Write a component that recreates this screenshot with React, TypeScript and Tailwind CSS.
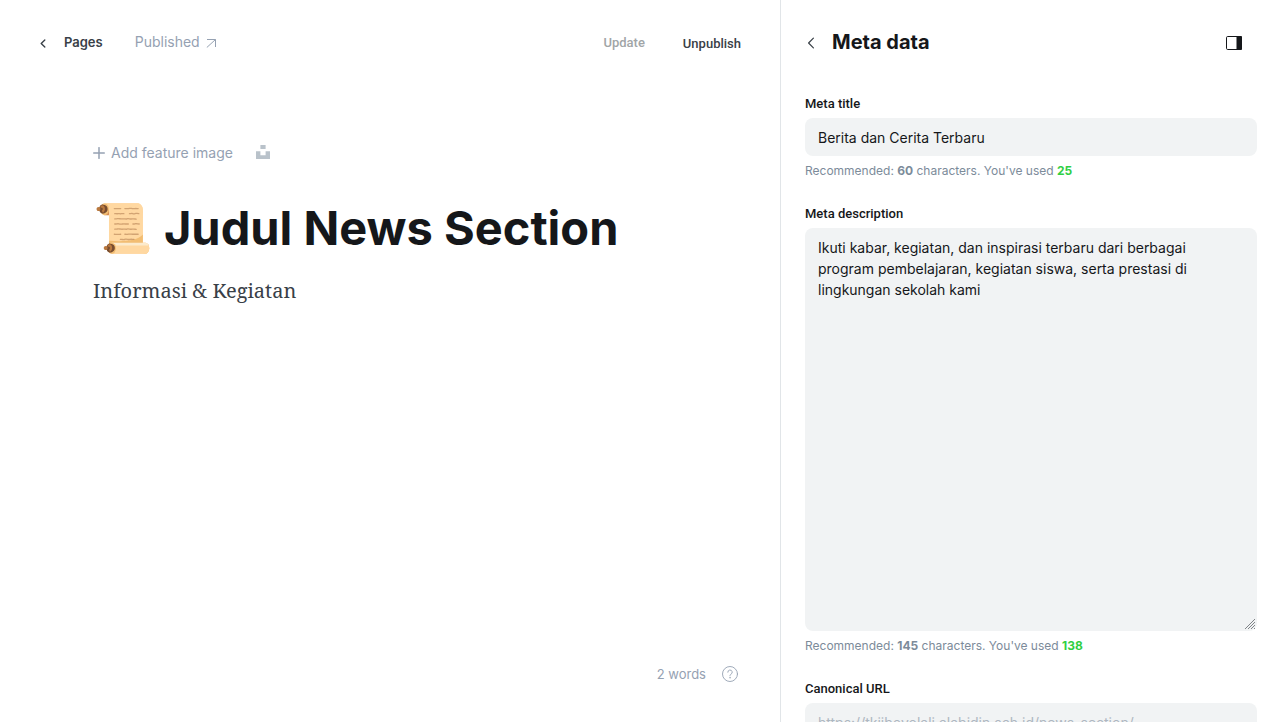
import { useState, type ReactNode } from "react";

function Chevron({ className }: { className: string }) {
  return (
    <svg viewBox="0 0 6 10" className={className} fill="none" stroke="currentColor" strokeLinecap="round" strokeLinejoin="round" aria-hidden="true">
      <path d="M5 1 1 5l4 4" />
    </svg>
  );
}

function ScrollEmoji() {
  return (
    <span role="img" aria-label="scroll" className="font-['Noto_Color_Emoji'] text-5xl leading-[60px]">
      📜
    </span>
  );
}

function Hint({ limit, used }: { limit: number; used: number }) {
  return (
    <p className="mt-1.5 text-xs leading-[18px] text-[#7c8b9a]">
      Recommended: <b className="font-bold">{limit}</b> characters. You&apos;ve used{" "}
      <b className="font-bold text-[#30cf43]">{used}</b>
    </p>
  );
}

function Field({ id, label, children }: { id: string; label: string; children: ReactNode }) {
  return (
    <div className="mb-6">
      <label
        htmlFor={id}
        className="mb-1 block font-['Roboto',sans-serif] text-[13px] leading-5 font-medium text-[#15171a]"
      >
        {label}
      </label>
      {children}
    </div>
  );
}

const control =
  "block w-full rounded-lg bg-[#f1f3f4] px-[13px] text-sm text-[#15171a] outline-none placeholder:text-[#aeb7c1]";

export default function App() {
  const [title, setTitle] = useState("Berita dan Cerita Terbaru");
  const [description, setDescription] = useState(
    "Ikuti kabar, kegiatan, dan inspirasi terbaru dari berbagai program pembelajaran, kegiatan siswa, serta prestasi di lingkungan sekolah kami",
  );

  return (
    <div className="flex h-screen bg-white font-['Inter',sans-serif] text-[#15171a]">
      <main className="flex min-w-0 flex-1 flex-col">
        <header className="flex h-[86px] items-center justify-between pr-[39px] pl-10">
          <div className="flex items-center">
            <a href="#pages" className="flex items-center text-[13px] font-semibold text-[#394047]">
              <Chevron className="mr-[18px] h-[9px] w-[6px] stroke-[1.5]" />
              Pages
            </a>
            <a href="#published" className="ml-8 flex items-center pb-0.5 text-sm text-[#95a1b2]">
              Published
              <svg viewBox="0 0 10 10" className="mt-0.5 ml-1.5 size-[10px]" fill="none" stroke="currentColor" aria-hidden="true">
                <path d="M1 1.5h8.5V9M9.5 1.5.8 9.5" />
              </svg>
            </a>
          </div>
          <div className="flex items-center font-['Roboto',sans-serif] text-[13px] font-medium">
            <button type="button" disabled className="mr-[38px] text-[#a1a5a7]">
              Update
            </button>
            <button type="button" className="pt-0.5 text-[#394047]">
              Unpublish
            </button>
          </div>
        </header>

        <section className="flex-1 px-[93px] pt-[56px]">
          <div className="flex h-[22px] items-center text-sm text-[#95a1b2]">
            <button type="button" className="flex items-center">
              <svg viewBox="0 0 12 12" className="mr-1.5 size-3" fill="none" stroke="currentColor" strokeWidth="1.5" strokeLinecap="round" aria-hidden="true">
                <path d="M6 .7v10.6M.7 6h10.6" />
              </svg>
              Add feature image
            </button>
            <button type="button" aria-label="Select image from Unsplash" className="ml-[23px] pb-0.5 text-[#b9c2ca]">
              <svg viewBox="0 0 14 14" className="size-[14px]" fill="currentColor" aria-hidden="true">
                <path d="M4.4 0h5.2v4H4.4zM0 6.2h4.4v4h5.2v-4H14V14H0z" />
              </svg>
            </button>
          </div>
          <h1 className="mt-[34px] text-[47px] leading-[60px] font-bold">
            <ScrollEmoji /> Judul News Section
          </h1>
          <p className="mt-4 font-['Noto_Serif',serif] text-xl leading-8 text-[#394047]">Informasi &amp; Kegiatan</p>
        </section>

        <footer className="flex h-24 items-center justify-end pr-[42px] text-[13px] text-[#95a1b2]">
          <span className="pt-0.5">2 words</span>
          <button type="button" aria-label="Help" className="ml-4">
            <svg viewBox="0 0 16 16" className="size-4" fill="none" stroke="currentColor" strokeWidth=".9" strokeLinecap="round" aria-hidden="true">
              <circle cx="8" cy="8" r="7.5" />
              <path d="M5.8 6.2a2.2 2.2 0 1 1 3.2 2c-.7.4-1 .7-1 1.6" />
              <circle cx="8" cy="11.8" r=".2" />
            </svg>
          </button>
        </footer>
      </main>

      <aside className="w-[502px] shrink-0 overflow-y-auto border-l border-[#e1e5e8] pr-[25px] pl-6 [scrollbar-width:none]">
        <header className="flex h-[86px] items-center">
          <button type="button" aria-label="Back" className="mr-[17px] ml-0.5 text-[#394047]">
            <Chevron className="h-3 w-2 stroke-1" />
          </button>
          <h2 className="pb-0.5 text-xl font-bold">Meta data</h2>
          <button type="button" aria-label="Toggle settings" className="mr-[15px] ml-auto">
            <svg viewBox="0 0 16 14" className="h-[14px] w-4" aria-hidden="true">
              <rect x=".5" y=".5" width="15" height="13" rx="1.2" fill="none" stroke="currentColor" />
              <path d="M10.5 0H15a1 1 0 0 1 1 1v12a1 1 0 0 1-1 1h-4.5z" fill="currentColor" />
            </svg>
          </button>
        </header>
        <form className="pt-2">
          <Field id="meta-title" label="Meta title">
            <input id="meta-title" className={control + " h-[38px]"} value={title} onChange={(e) => setTitle(e.target.value)} />
            <Hint limit={60} used={title.length} />
          </Field>
          <Field id="meta-description" label="Meta description">
            <div className="relative">
              <textarea
                id="meta-description"
                className={control + " h-[403px] resize-none py-[9px] leading-[21px]"}
                value={description}
                onChange={(e) => setDescription(e.target.value)}
              />
              <svg viewBox="0 0 10 10" className="pointer-events-none absolute right-0.5 bottom-0.5 size-[10px]" stroke="#808488" aria-hidden="true">
                <path d="M0 10 10 0M3 10l7-7M6 10l4-4M9 10l1-1" />
              </svg>
            </div>
            <Hint limit={145} used={description.length} />
          </Field>
          <Field id="canonical-url" label="Canonical URL">
            <input id="canonical-url" className={control + " h-[38px]"} placeholder="https://tkiiboyolali.alabidin.sch.id/news-section/" />
          </Field>
        </form>
      </aside>
    </div>
  );
}
